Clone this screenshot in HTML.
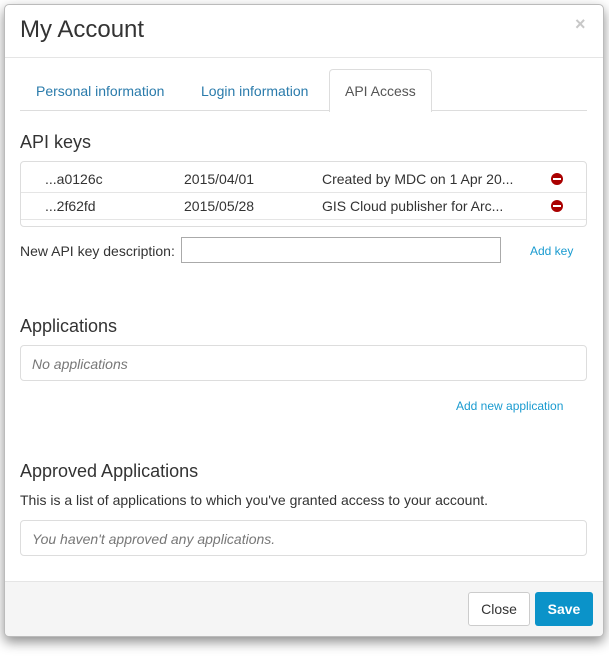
<!DOCTYPE html><html><head><style>
body{margin:0;width:609px;height:661px;background:#fff;font-family:"Liberation Sans",sans-serif;color:#333;position:relative;overflow:hidden}
.m{position:absolute;left:4px;top:4px;width:598px;height:631px;border:1px solid #bbb;border-radius:5px;box-shadow:0 5px 12px rgba(0,0,0,.45);background:#fff;overflow:hidden}
.a{position:absolute}
.blue{color:#2a7bab}
.box{position:absolute;border:1px solid #ddd;border-radius:4px;background:#fff}
</style></head><body><div class="m">
<div class="a" style="left:15px;top:11px;font-size:24px">My Account</div>
<div class="a" style="left:570px;top:9px;font-size:18px;color:#c8c8c8;font-weight:bold">×</div>
<div class="a" style="left:0;top:52px;width:598px;border-top:1px solid #e5e5e5"></div>
<div class="a" style="left:15px;top:105px;width:567px;border-top:1px solid #ddd"></div>
<div class="a blue" style="left:31px;top:78px;font-size:14px">Personal information</div>
<div class="a blue" style="left:196px;top:78px;font-size:14px">Login information</div>
<div class="a" style="left:324px;top:64px;width:101px;height:42px;border:1px solid #ddd;border-bottom:none;border-radius:4px 4px 0 0;background:#fff"></div>
<div class="a" style="left:340px;top:78px;font-size:14px;color:#555">API Access</div>
<div class="a" style="left:15px;top:127px;font-size:18px">API keys</div>
<div class="box" style="left:15px;top:156px;width:565px;height:64px"></div>
<div class="a" style="left:16px;top:187px;width:565px;border-top:1px solid #e5e5e5"></div>
<div class="a" style="left:16px;top:214px;width:565px;border-top:1px solid #e5e5e5"></div>
<div class="a" style="left:40px;top:166px;font-size:14px">...a0126c</div>
<div class="a" style="left:179px;top:166px;font-size:14px">2015/04/01</div>
<div class="a" style="left:317px;top:166px;font-size:14px">Created by MDC on 1 Apr 20...</div>
<div class="a" style="left:40px;top:193px;font-size:14px">...2f62fd</div>
<div class="a" style="left:179px;top:193px;font-size:14px">2015/05/28</div>
<div class="a" style="left:317px;top:193px;font-size:14px">GIS Cloud publisher for Arc...</div>
<div class="a" style="left:546px;top:168px;width:12px;height:12px;border-radius:50%;background:#a00"><div style="margin:5px 2px;height:2px;background:#fff"></div></div>
<div class="a" style="left:546px;top:195px;width:12px;height:12px;border-radius:50%;background:#a00"><div style="margin:5px 2px;height:2px;background:#fff"></div></div>
<div class="a" style="left:15px;top:238px;font-size:14px">New API key description:</div>
<div class="a" style="left:176px;top:232px;width:318px;height:24px;border:1px solid #aaa"></div>
<div class="a" style="left:525px;top:239px;font-size:12px;color:#1a9bd0">Add key</div>
<div class="a" style="left:15px;top:311px;font-size:18px">Applications</div>
<div class="box" style="left:15px;top:340px;width:565px;height:34px"></div>
<div class="a" style="left:27px;top:351px;font-size:14px;font-style:italic;color:#777">No applications</div>
<div class="a" style="left:451px;top:394px;font-size:12px;color:#1a9bd0">Add new application</div>
<div class="a" style="left:15px;top:456px;font-size:18px">Approved Applications</div>
<div class="a" style="left:15px;top:487px;font-size:14px">This is a list of applications to which you've granted access to your account.</div>
<div class="box" style="left:15px;top:515px;width:565px;height:34px"></div>
<div class="a" style="left:27px;top:526px;font-size:14px;font-style:italic;color:#777">You haven't approved any applications.</div>
<div class="a" style="left:0;top:576px;width:598px;height:60px;background:#f5f5f5;border-top:1px solid #e5e5e5"></div>
<div class="a" style="left:463px;top:587px;width:60px;height:32px;border:1px solid #ccc;border-radius:3px;background:#fff;text-align:center;line-height:32px;font-size:14px">Close</div>
<div class="a" style="left:530px;top:587px;width:58px;height:34px;border-radius:3px;background:#0b93c9;color:#fff;text-align:center;line-height:34px;font-size:14px;font-weight:bold">Save</div>
</div></body></html>
